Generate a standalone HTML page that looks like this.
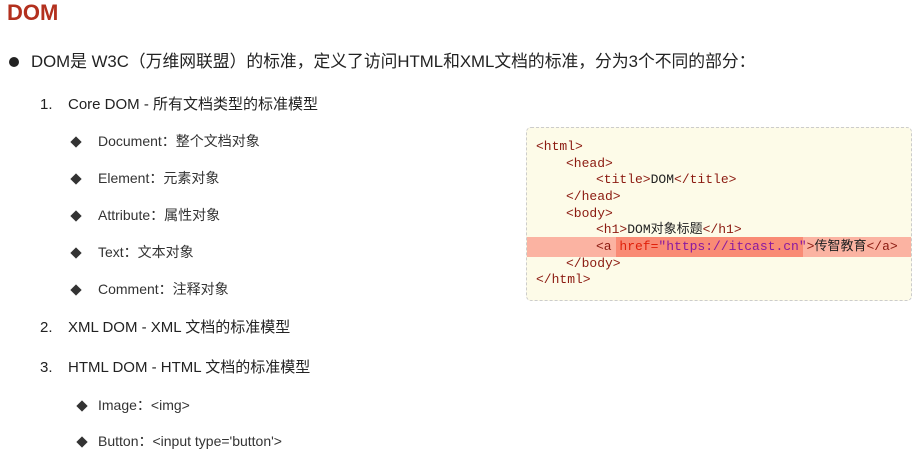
<!DOCTYPE html>
<html><head><meta charset="utf-8"><style>
body{margin:0;width:914px;height:460px;background:#fff;position:relative;overflow:hidden;font-family:"Liberation Sans","Noto Sans CJK SC",sans-serif;color:#222}
.a{position:absolute;white-space:nowrap;line-height:1}
.h{left:7px;top:2px;font-size:22px;font-weight:bold;color:#b3301e}
.t{font-size:16.8px}
.s{font-size:14px;color:#333}
.d{position:absolute;width:8px;height:8px;background:#333;transform:rotate(45deg)}
.box{position:absolute;left:526px;top:127px;width:384px;height:172px;background:#fdfbe8;border:1px dashed #ccc;border-radius:5px}
.c{position:absolute;left:9px;font-family:"Liberation Mono","Noto Sans CJK SC",monospace;font-size:13px;color:#222;white-space:nowrap;line-height:1}
.tg{color:#8b1a10}
</style></head><body>
<div class="a h">DOM</div>
<div style="position:absolute;left:9px;top:57px;width:10px;height:10px;border-radius:50%;background:#222"></div>
<div class="a t" style="left:31px;top:54px">DOM是 W3C（万维网联盟）的标准，定义了访问HTML和XML文档的标准，分为3个不同的部分：</div>
<div class="a s" style="left:40px;top:97px;font-size:15px;color:#222">1.</div>
<div class="a s" style="left:68px;top:97px;font-size:15px;color:#222">Core DOM - 所有文档类型的标准模型</div>
<div class="d" style="left:72px;top:138px"></div><div class="a s" style="left:98px;top:134px">Document：整个文档对象</div>
<div class="d" style="left:72px;top:175px"></div><div class="a s" style="left:98px;top:171px">Element：元素对象</div>
<div class="d" style="left:72px;top:212px"></div><div class="a s" style="left:98px;top:208px">Attribute：属性对象</div>
<div class="d" style="left:72px;top:249px"></div><div class="a s" style="left:98px;top:245px">Text：文本对象</div>
<div class="d" style="left:72px;top:286px"></div><div class="a s" style="left:98px;top:282px">Comment：注释对象</div>
<div class="a s" style="left:40px;top:320px;font-size:15px;color:#222">2.</div>
<div class="a s" style="left:68px;top:320px;font-size:15px;color:#222">XML DOM - XML 文档的标准模型</div>
<div class="a s" style="left:40px;top:360px;font-size:15px;color:#222">3.</div>
<div class="a s" style="left:68px;top:360px;font-size:15px;color:#222">HTML DOM - HTML 文档的标准模型</div>
<div class="d" style="left:78px;top:402px"></div><div class="a s" style="left:98px;top:398px">Image：&lt;img&gt;</div>
<div class="d" style="left:78px;top:438px"></div><div class="a s" style="left:98px;top:434px">Button：&lt;input type='button'&gt;</div>
<div class="box">
<div style="position:absolute;left:0;top:109px;width:384px;height:20px;background:#fbb3a2"></div>
<div style="position:absolute;left:89px;top:109px;width:187px;height:20px;background:#f98b75"></div>
<div class="c tg" style="top:12px">&lt;html&gt;</div>
<div class="c tg" style="top:29px;left:39px">&lt;head&gt;</div>
<div class="c" style="top:45px;left:69px"><span class="tg">&lt;title&gt;</span>DOM<span class="tg">&lt;/title&gt;</span></div>
<div class="c tg" style="top:62px;left:39px">&lt;/head&gt;</div>
<div class="c tg" style="top:79px;left:39px">&lt;body&gt;</div>
<div class="c" style="top:95px;left:69px"><span class="tg">&lt;h1&gt;</span>DOM对象标题<span class="tg">&lt;/h1&gt;</span></div>
<div class="c" style="top:112px;left:69px"><span class="tg">&lt;a </span><span style="color:#e0200a">href=</span><span style="color:#8a1aa0">"https://itcast.cn"</span><span class="tg">&gt;</span>传智教育<span class="tg">&lt;/a&gt;</span></div>
<div class="c tg" style="top:129px;left:39px">&lt;/body&gt;</div>
<div class="c tg" style="top:145px">&lt;/html&gt;</div>
</div>
</body></html>
